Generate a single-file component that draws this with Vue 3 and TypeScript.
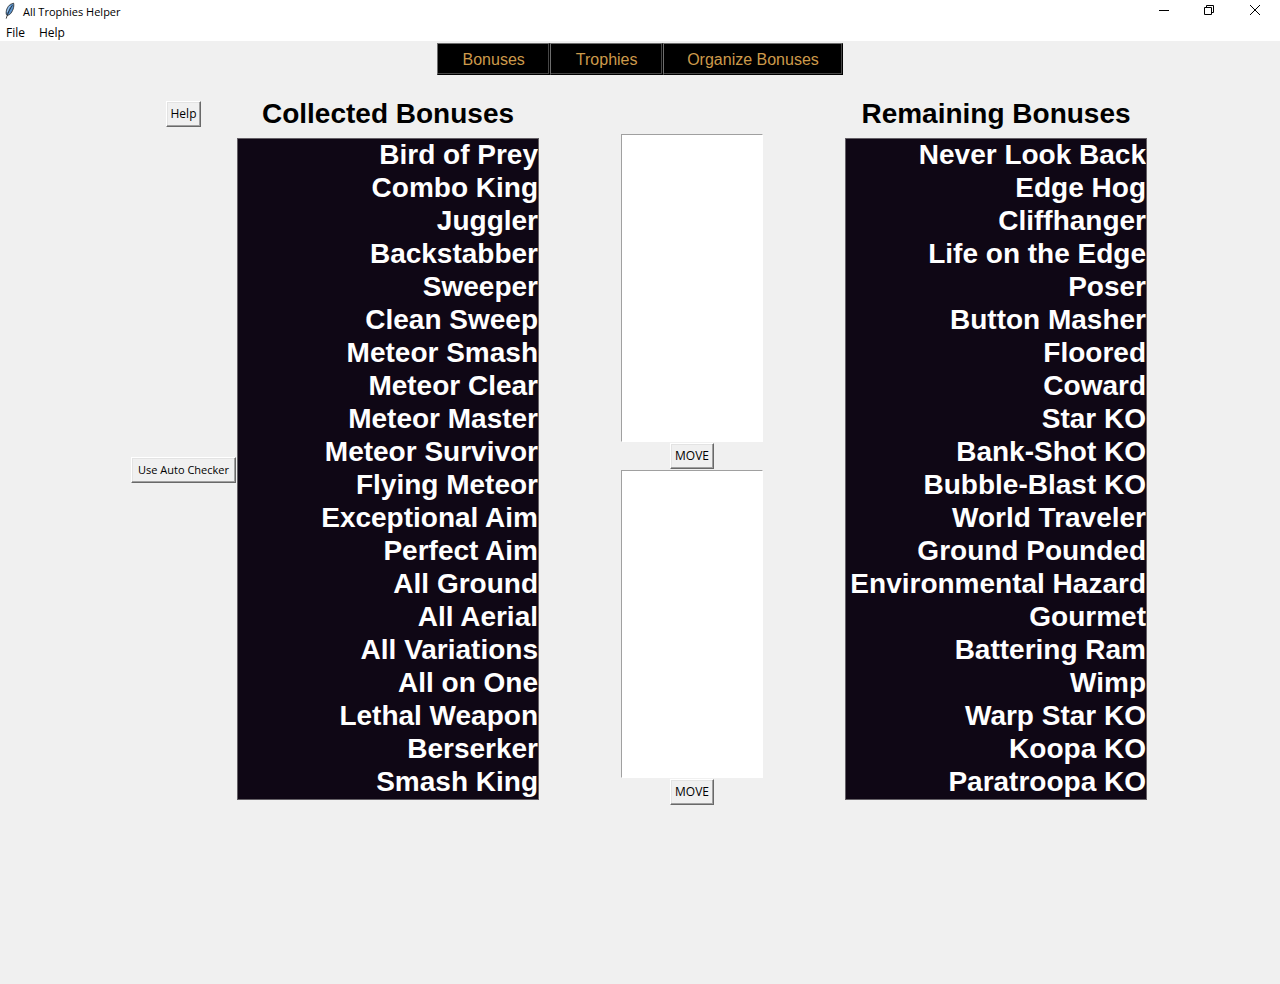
<script setup lang="ts">
import { ref } from 'vue'

const menus = ['File', 'Help']
const tabs = ['Bonuses', 'Trophies', 'Organize Bonuses']

const collected = ref<string[]>([
  'Bird of Prey', 'Combo King', 'Juggler', 'Backstabber', 'Sweeper',
  'Clean Sweep', 'Meteor Smash', 'Meteor Clear', 'Meteor Master', 'Meteor Survivor',
  'Flying Meteor', 'Exceptional Aim', 'Perfect Aim', 'All Ground', 'All Aerial',
  'All Variations', 'All on One', 'Lethal Weapon', 'Berserker', 'Smash King',
])
const remaining = ref<string[]>([
  'Never Look Back', 'Edge Hog', 'Cliffhanger', 'Life on the Edge', 'Poser',
  'Button Masher', 'Floored', 'Coward', 'Star KO', 'Bank-Shot KO',
  'Bubble-Blast KO', 'World Traveler', 'Ground Pounded', 'Environmental Hazard', 'Gourmet',
  'Battering Ram', 'Wimp', 'Warp Star KO', 'Koopa KO', 'Paratroopa KO',
])

const pickedCollected = ref('')
const pickedRemaining = ref('')

const toRemaining = ref<string[]>([])
const toCollected = ref<string[]>([])

function stage(from: string[], to: string[], name: string) {
  const index = from.indexOf(name)
  if (index >= 0) to.push(...from.splice(index, 1))
}

function move(from: string[], to: string[]) {
  to.push(...from.splice(0))
}
</script>

<template>
  <div class="window">
    <header class="chrome">
      <div class="titlebar">
        <svg class="feather" width="12" height="18" viewBox="0 0 12 18" aria-hidden="true">
          <path d="M2.3 12.4 C1.6 8.8 3.4 4.4 6.4 2.4 L9.6 1.2 C10.4 4.6 9 9.4 5.6 12.6 L3.4 13.4 Z" fill="#5b93cc" stroke="#222" stroke-width=".8" />
          <path d="M8.4 3.4 C6 6.6 3.8 10.6 2.2 16.6" fill="none" stroke="#111" stroke-width=".8" />
          <path d="M6.2 4 C4.6 5.8 3.8 7.6 3.4 9.8" fill="none" stroke="#b5d6f5" stroke-width=".9" />
        </svg>
        <span class="caption">All Trophies Helper</span>
        <div class="controls">
          <button type="button" aria-label="Minimize">
            <svg width="10" height="10" viewBox="0 0 10 10"><path d="M0 5.5H10" /></svg>
          </button>
          <button type="button" aria-label="Restore">
            <svg width="10" height="10" viewBox="0 0 10 10"><path d="M.5 2.5H7.5V9.5H.5ZM2.5 2.5V.5H9.5V7.5H7.5" /></svg>
          </button>
          <button type="button" aria-label="Close">
            <svg width="10" height="10" viewBox="0 0 10 10"><path d="M0 0L10 10M10 0L0 10" /></svg>
          </button>
        </div>
      </div>
      <div class="menubar">
        <button v-for="menu in menus" :key="menu" type="button">{{ menu }}</button>
      </div>
    </header>

    <nav class="tabs">
      <button v-for="tab in tabs" :key="tab" type="button">{{ tab }}</button>
    </nav>

    <main class="board">
      <button class="raised" type="button">Help</button>
      <h2 id="collected-title">Collected Bonuses</h2>
      <span></span>
      <h2 id="remaining-title">Remaining Bonuses</h2>

      <button class="raised checker" type="button">Use Auto Checker</button>
      <select
        v-model="pickedCollected"
        class="bonuses"
        size="20"
        aria-labelledby="collected-title"
        @dblclick="stage(collected, toRemaining, pickedCollected)"
      >
        <option v-for="name in collected" :key="name" :value="name">{{ name }}</option>
      </select>
      <div class="transfer">
        <select class="staged" size="19" aria-label="Bonuses to collect">
          <option v-for="name in toCollected" :key="name">{{ name }}</option>
        </select>
        <button class="raised" type="button" @click="move(toCollected, collected)">MOVE</button>
        <select class="staged" size="19" aria-label="Bonuses to return">
          <option v-for="name in toRemaining" :key="name">{{ name }}</option>
        </select>
        <button class="raised" type="button" @click="move(toRemaining, remaining)">MOVE</button>
      </div>
      <select
        v-model="pickedRemaining"
        class="bonuses"
        size="20"
        aria-labelledby="remaining-title"
        @dblclick="stage(remaining, toCollected, pickedRemaining)"
      >
        <option v-for="name in remaining" :key="name" :value="name">{{ name }}</option>
      </select>
    </main>
  </div>
</template>

<style>
body {
  background: #f0f0f0;
}
</style>

<style scoped>
.window {
  min-height: 100vh;
  background: #f0f0f0;
  color: #000;
  font: 12px/16px "Open Sans", "Noto Sans", sans-serif;
}
button {
  margin: 0;
  padding: 0;
  border: 0;
  background: none;
  color: inherit;
  font: inherit;
}
.chrome {
  background: #fff;
}
.titlebar {
  display: flex;
  align-items: center;
  height: 24px;
  padding-left: 4px;
}
.feather {
  align-self: flex-start;
  margin-top: 2px;
}
.caption {
  margin-left: 7px;
  font-size: 11px;
}
.controls {
  display: flex;
  align-self: flex-start;
  margin-left: auto;
}
.controls button {
  display: flex;
  align-items: center;
  justify-content: center;
  width: 46px;
  height: 20px;
  margin-right: -1px;
}
.controls button:last-child {
  width: 48px;
  margin-right: 1px;
}
.controls path {
  fill: none;
  stroke: #000;
}
.menubar {
  display: flex;
  gap: 14px;
  height: 17px;
  padding-left: 6px;
}
.menubar button {
  line-height: 17px;
}
.tabs {
  display: flex;
  justify-content: center;
  padding-top: 2px;
}
.tabs button {
  box-sizing: border-box;
  min-width: 113px;
  height: 32px;
  padding: 2px 23px 0;
  border: 1px solid;
  border-color: #6e6e6e #000 #000 #6e6e6e;
  background: #000;
  box-shadow: inset -1px -1px #464646;
  color: #cd9a4b;
  font: 16px/28px "Liberation Sans", Arial, sans-serif;
}
.board {
  display: grid;
  grid-template-columns: 107px 302px 306px 302px;
  grid-template-rows: 40px auto;
  place-content: start center;
  place-items: center;
  padding: 19px 3px 0 0;
}
h2 {
  margin: 0;
  padding-bottom: 2px;
  font: bold 28px/33px "Liberation Sans", Arial, sans-serif;
}
.raised {
  height: 26px;
  padding: 0 4px;
  border: 1px solid;
  border-color: #fff #696969 #696969 #fff;
  background: #f0f0f0;
  box-shadow: inset -1px -1px #a0a0a0, inset 1px 1px #e3e3e3;
  line-height: 24px;
  white-space: nowrap;
}
.checker {
  padding: 0 6px;
  font-size: 11px;
}
.bonuses {
  align-self: start;
  width: 100%;
  height: 662px;
  margin: 4px 0 0;
  padding: 0;
  overflow: hidden;
  border: 1px solid #646066;
  border-radius: 0;
  background: #0f0715;
  color: #fff;
  font: bold 28px/33px "Liberation Sans", Arial, sans-serif;
}
.bonuses option {
  box-sizing: border-box;
  height: 33px;
  min-height: 33px;
  padding: 0;
  font-weight: bold;
  line-height: 31px;
  text-align: right;
}
.transfer {
  display: flex;
  flex-direction: column;
  align-items: center;
  gap: 1px;
}
.staged {
  width: 142px;
  height: 308px;
  padding: 0;
  overflow: hidden;
  border: 1px solid;
  border-color: #a0a0a0 #fff #fff #a0a0a0;
  border-radius: 0;
  background: #fff;
  color: #000;
  font: inherit;
}
</style>
